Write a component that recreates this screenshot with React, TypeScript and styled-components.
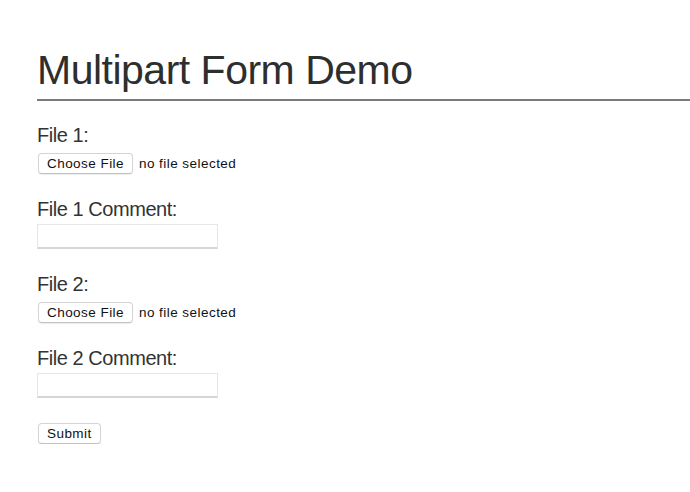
import React from "react";
import styled, { createGlobalStyle } from "styled-components";

const Global = createGlobalStyle`
  html, body { margin: 0; padding: 0; background: #ffffff; }
  body { font-family: "Liberation Sans", Arial, sans-serif; color: #333333; }
`;

const Page = styled.div`
  padding: 46px 0 0 37px;
`;

const Title = styled.h1`
  margin: 0;
  font-size: 41px;
  line-height: 48px;
  font-weight: 400;
  letter-spacing: -0.5px;
  color: #2e2e2e;
  padding-bottom: 5px;
  border-bottom: 2px solid #7a7a7a;
`;

const Form = styled.form`
  display: flex;
  flex-direction: column;
  padding-top: 22px;
`;

const Field = styled.div<{ $gap: number; $after: number }>`
  display: flex;
  flex-direction: column;
  align-items: flex-start;
  gap: ${(p) => p.$gap}px;
  margin-bottom: ${(p) => p.$after}px;
`;

const Label = styled.label`
  font-size: 20px;
  line-height: 24px;
  letter-spacing: -0.45px;
  color: #333333;
`;

const FileRow = styled.div`
  display: flex;
  align-items: center;
  gap: 6px;
  margin-left: 1px;
`;

const Btn = styled.button`
  font-family: "Liberation Sans", Arial, sans-serif;
  font-size: 13.5px;
  letter-spacing: 0.45px;
  line-height: 15px;
  color: #111111;
  background: #ffffff;
  border: 1px solid #d4d4d4;
  border-bottom-color: #c2c2c2;
  border-radius: 4px;
  box-shadow: 0 1px 1px rgba(0, 0, 0, 0.08);
  padding: 2px 8px;
  height: 21px;
  margin: 0;
`;

const NoFile = styled.span`
  font-size: 13.5px;
  letter-spacing: 0.45px;
  color: #111111;
`;

const TextInput = styled.input`
  width: 181px;
  height: 25px;
  box-sizing: border-box;
  margin: 0;
  border: 1px solid #e6e6e6;
  border-bottom: 2px solid #d6d6d6;
  background: #ffffff;
  font-size: 13px;
  padding: 2px 4px;
  outline: none;
`;

const HiddenFile = styled.input`
  display: none;
`;

export default function App() {
  return (
    <>
      <Global />
      <Page>
        <Title>Multipart Form Demo</Title>
        <Form onSubmit={(e) => e.preventDefault()}>
          <Field $gap={6} $after={23}>
            <Label htmlFor="f1">File 1:</Label>
            <FileRow>
              <HiddenFile type="file" id="f1" />
              <Btn type="button">Choose File</Btn>
              <NoFile>no file selected</NoFile>
            </FileRow>
          </Field>
          <Field $gap={3} $after={23}>
            <Label htmlFor="c1">File 1 Comment:</Label>
            <TextInput type="text" id="c1" />
          </Field>
          <Field $gap={6} $after={23}>
            <Label htmlFor="f2">File 2:</Label>
            <FileRow>
              <HiddenFile type="file" id="f2" />
              <Btn type="button">Choose File</Btn>
              <NoFile>no file selected</NoFile>
            </FileRow>
          </Field>
          <Field $gap={3} $after={25}>
            <Label htmlFor="c2">File 2 Comment:</Label>
            <TextInput type="text" id="c2" />
          </Field>
          <FileRow>
            <Btn type="submit">Submit</Btn>
          </FileRow>
        </Form>
      </Page>
    </>
  );
}
